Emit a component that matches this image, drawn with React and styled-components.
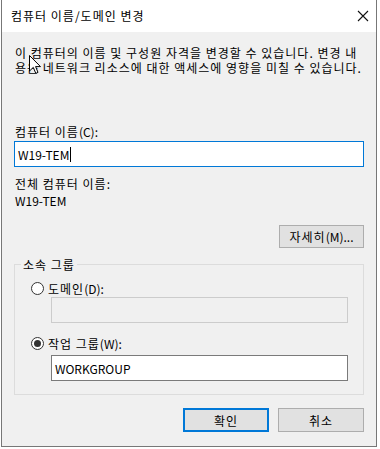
import React from 'react';
import styled, { createGlobalStyle } from 'styled-components';

const Global = createGlobalStyle`
  html, body {
    margin: 0;
    padding: 0;
    background: #ffffff;
  }
  body {
    font-family: 'Noto Sans CJK KR', 'Noto Sans', sans-serif;
    font-size: 12px;
    letter-spacing: 1px;
    color: #000;
  }
`;

const Window = styled.div`
  position: relative;
  width: 376px;
  height: 447px;
  margin-left: 1px;
  box-sizing: border-box;
  border: 1px solid #777;
  border-top: none;
  background: #f0f0f0;
  display: flex;
  flex-direction: column;
`;

const TitleBar = styled.div`
  height: 32px;
  background: #fff;
  display: flex;
  align-items: center;
  justify-content: space-between;
  padding: 0 7px 0 9px;
  flex-shrink: 0;
`;

const Title = styled.span`
  line-height: 15px;
  margin-top: -1px;
`;

const Body = styled.div`
  flex: 1;
  padding: 13px 12px 0 12px;
  display: flex;
  flex-direction: column;
`;

const Intro = styled.p`
  margin: 0 0 0 1px;
  line-height: 15px;
`;

const Label = styled.div`
  line-height: 15px;
  margin-top: ${p => p.$top || 0}px;
  margin-left: 1px;
  letter-spacing: ${p => p.$latin ? 0 : 1}px;
`;

// latin bits (access keys, colons) are narrower in the original
const Key = styled.span`
  letter-spacing: 0;
`;

const TextBox = styled.div`
  box-sizing: border-box;
  height: 26px;
  margin-top: ${p => p.$top || 0}px;
  margin-left: ${p => p.$left || 0}px;
  width: ${p => p.$width ? p.$width + 'px' : 'auto'};
  border: 1px solid ${p => p.$focus ? '#0078d7' : p.$disabled ? '#cccccc' : '#7a7a7a'};
  background: ${p => p.$disabled ? '#f0f0f0' : '#ffffff'};
  display: flex;
  align-items: center;
  padding-left: 3px;
  line-height: 15px;
  letter-spacing: 0;
`;

const Caret = styled.span`
  display: inline-block;
  width: 1px;
  height: 15px;
  background: #000;
  margin-left: 1px;
`;

const ButtonRow = styled.div`
  display: flex;
  justify-content: flex-end;
  gap: 9px;
  margin-top: ${p => p.$top || 0}px;
`;

const Button = styled.div`
  box-sizing: border-box;
  width: ${p => p.$width}px;
  height: ${p => p.$height || 23}px;
  background: #e1e1e1;
  border: ${p => p.$default ? '2px solid #0078d7' : '1px solid #adadad'};
  display: flex;
  align-items: center;
  justify-content: center;
  line-height: 15px;
`;

const Group = styled.fieldset`
  margin: 9px 0 0 0;
  padding: 0 0 13px 0;
  border: 1px solid #dcdcdc;
  min-width: 0;
`;

const Legend = styled.legend`
  margin-left: 6px;
  padding: 0 2px;
  line-height: 15px;
`;

const RadioRow = styled.div`
  display: flex;
  align-items: center;
  gap: 4px;
  margin-left: 16px;
  margin-top: ${p => p.$top || 0}px;
  line-height: 15px;
`;

const RadioCircle = styled.span`
  box-sizing: border-box;
  width: 13px;
  height: 13px;
  border-radius: 50%;
  border: 1px solid #333;
  background: #fff;
  display: flex;
  align-items: center;
  justify-content: center;

  &::after {
    content: '';
    width: 7px;
    height: 7px;
    border-radius: 50%;
    background: #333;
    display: ${p => p.$checked ? 'block' : 'none'};
  }
`;

const Cursor = styled.svg`
  position: absolute;
  left: 27px;
  top: 55px;
`;

const CloseIcon = () => (
  <svg width="12" height="12" viewBox="0 0 12 12">
    <path d="M1 1 L11 11 M11 1 L1 11" stroke="#111" strokeWidth="1.1" />
  </svg>
);

export default function App() {
  return (
    <>
      <Global />
      <Window>
        <TitleBar>
          <Title>컴퓨터 이름/도메인 변경</Title>
          <CloseIcon />
        </TitleBar>
        <Body>
          <Intro>
            이 컴퓨터의 이름 및 구성원 자격을 변경할 수 있습니다. 변경 내
            <br />
            용은 네트워크 리소스에 대한 액세스에 영향을 미칠 수 있습니다.
          </Intro>
          <Label $top={49}>컴퓨터 이름<Key>(C):</Key></Label>
          <TextBox $top={2} $focus>
            W19-TEM<Caret />
          </TextBox>
          <Label $top={9}>전체 컴퓨터 이름<Key>:</Key></Label>
          <Label $top={2} $latin>W19-TEM</Label>
          <ButtonRow $top={17}>
            <Button $width={85}>자세히<Key>(M)...</Key></Button>
          </ButtonRow>
          <Group>
            <Legend>소속 그룹</Legend>
            <RadioRow $top={9}>
              <RadioCircle />
              <span>도메인<Key>(D):</Key></span>
            </RadioRow>
            <TextBox $top={1} $left={36} $width={297} $disabled />
            <RadioRow $top={13}>
              <RadioCircle $checked />
              <span>작업 그룹<Key>(W):</Key></span>
            </RadioRow>
            <TextBox $top={4} $left={36} $width={297}>WORKGROUP</TextBox>
          </Group>
          <ButtonRow $top={13}>
            <Button $width={86} $height={24} $default>확인</Button>
            <Button $width={86} $height={24}>취소</Button>
          </ButtonRow>
        </Body>
        <Cursor width="13" height="20" viewBox="0 0 13 20">
          <path
            d="M0.5 0.5 L0.5 16 L4.3 12.4 L6.8 18.4 L9 17.4 L6.6 11.6 L11.5 11.6 Z"
            fill="#fff"
            stroke="#000"
            strokeWidth="1"
          />
        </Cursor>
      </Window>
    </>
  );
}
